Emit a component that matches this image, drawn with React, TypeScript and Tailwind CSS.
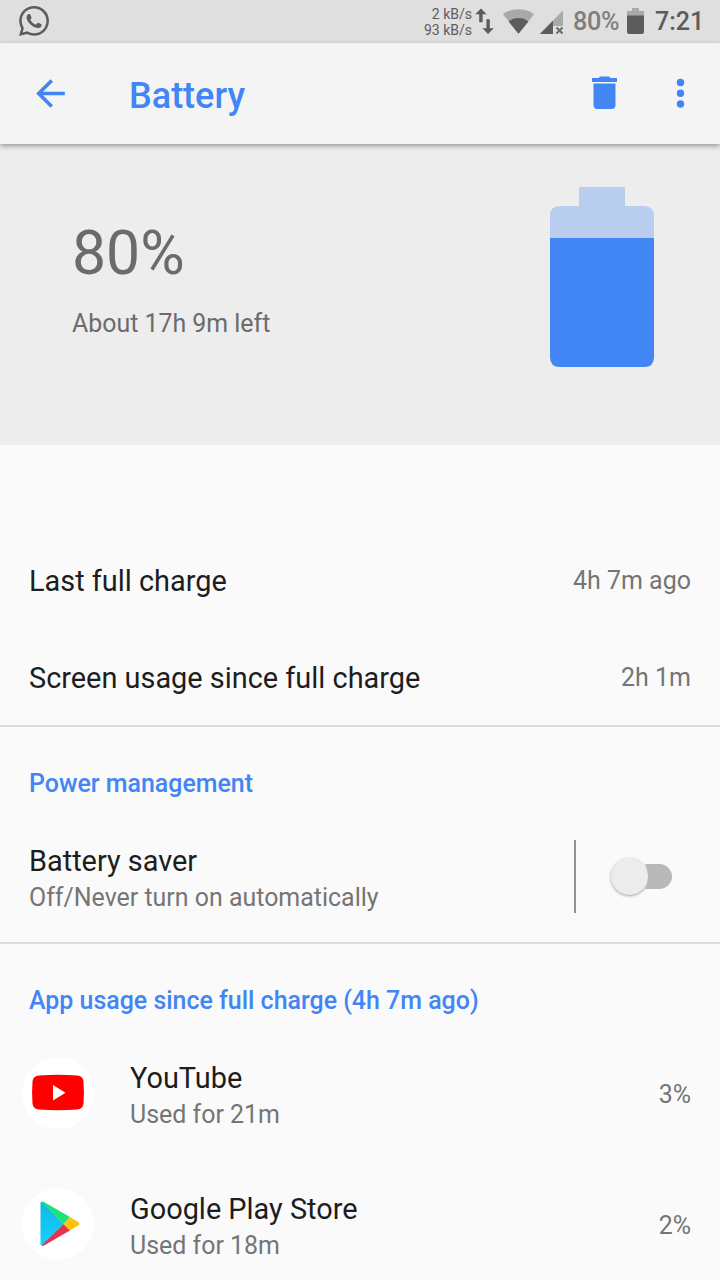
import React from "react";
import { SiWhatsapp } from "react-icons/si";

function StatusBar() {
  return (
    <div className="flex h-[43px] shrink-0 bg-[#dfdfdf] text-[#5c5c5c]">
      <SiWhatsapp className="mt-[6px] ml-[19px] size-[30px] shrink-0" />
      <div className="ml-auto flex w-[60px] flex-col pt-[6px] text-right text-[14px] leading-[16px] whitespace-nowrap">
        <span>2 kB/s</span>
        <span>93 kB/s</span>
      </div>
      <svg className="ml-[3px] h-[43px] w-[20px] shrink-0" viewBox="475 0 20 43" fill="#5c5c5c">
        <path d="M481 8.5l5.6 5.8h-4v8h-3.4v-8h-4z" />
        <path d="M488 34l-5.6-5.8h4v-9h3.4v9h4z" />
      </svg>
      <svg className="ml-[7px] h-[43px] w-[32px] shrink-0" viewBox="502 0 32 43">
        <path d="M518.5 33.7L503 14.2C507 11 512.5 9.2 518.5 9.2S530 11 534 14.2z" fill="#a9a9a9" />
        <path d="M518.5 33.7L508.6 21.4C511.3 19.2 514.7 18 518.5 18s7.2 1.2 9.9 3.4z" fill="#5c5c5c" />
      </svg>
      <svg className="ml-[5px] h-[43px] w-[26px] shrink-0" viewBox="539 0 26 43">
        <path d="M563 10.5V26h-10v-5.5z" fill="#a9a9a9" />
        <path d="M553 20.5V34h-13.2z" fill="#5c5c5c" />
        <path d="M556.5 27.5l6 6M562.5 27.5l-6 6" stroke="#6c6c6c" strokeWidth="2" />
      </svg>
      <span className="ml-[8px] w-[54px] text-[25.2px] leading-[44px] font-medium tracking-[-0.3px] text-[#7e7e7e]">80%</span>
      <svg className="h-[43px] w-[17px] shrink-0" viewBox="627 0 17 43">
        <path d="M632 8h7v3h5v5h-17v-5h5z" fill="#a9a9a9" />
        <path d="M627 15.5h17V32q0 2-2 2h-13q-2 0-2-2z" fill="#5c5c5c" />
      </svg>
      <span className="ml-[11px] w-[65px] text-[25px] leading-[44px] font-medium">7:21</span>
    </div>
  );
}

function AppBar() {
  return (
    <header className="z-10 flex h-[101px] shrink-0 items-center bg-[#f4f4f4] text-[#4285f4] shadow-[0_2px_5px_rgba(0,0,0,0.36)]">
      <svg className="ml-[29px] size-[43px] shrink-0" viewBox="0 0 24 24" fill="currentColor">
        <path d="M20 11H7.830l5.590-5.590L12 4l-8 8 8 8 1.410-1.410L7.830 13H20v-2z" />
      </svg>
      <h1 className="ml-[57px] pt-[4px] text-[36px] leading-[42px] font-medium">Battery</h1>
      <svg className="mb-[2px] ml-auto h-[36px] w-[27px] shrink-0" viewBox="591 75 27 36" fill="currentColor">
        <path d="M592 78h6.5l1.5-1.5h9l1.5 1.5h6.5v4h-25z" />
        <path d="M593.5 83.5h22V105q0 4-4 4h-14q-4 0-4-4z" />
      </svg>
      <svg className="mr-[33px] mb-[2px] ml-[56px] h-[36px] w-[13px] shrink-0" viewBox="0 0 13 36" fill="currentColor">
        <circle cx="6.5" cy="7.5" r="3.7" />
        <circle cx="6.5" cy="18.3" r="3.7" />
        <circle cx="6.5" cy="29" r="3.7" />
      </svg>
    </header>
  );
}

function Summary() {
  return (
    <section className="flex h-[301px] shrink-0 justify-between bg-[#ededed] pr-[66px] pl-[72px] text-[#6b6b6b]">
      <div className="pt-[73px]">
        <div className="text-[60.7px] leading-[73px]">80%</div>
        <div className="mt-[18px] text-[24.9px] leading-[31px]">About 17h 9m left</div>
      </div>
      <svg className="mt-[43px] h-[180px] w-[104px]" viewBox="0 0 104 180">
        <path d="M29 0h46v19h19q10 0 10 10v22.5H0V29q0-10 10-10h19z" fill="#b9cdef" />
        <path d="M0 51h104v119q0 10-10 10H10q-10 0-10-10z" fill="#4285f4" />
      </svg>
    </section>
  );
}

function InfoRow({ label, value }: { label: string; value: string }) {
  return (
    <div className="flex h-[97px] items-center justify-between px-[29px]">
      <span className="text-[28.9px] leading-[34px]">{label}</span>
      <span className="text-[25px] leading-[34px] text-[#757575]">{value}</span>
    </div>
  );
}

function TwoLine({ title, detail }: { title: string; detail: string }) {
  return (
    <div className="flex flex-col pt-[3px]">
      <span className="text-[28.9px] leading-[38px]">{title}</span>
      <span className="text-[24.95px] leading-[35px] text-[#757575]">{detail}</span>
    </div>
  );
}

function AppRow({ icon, name, used, share }: { icon: React.ReactNode; name: string; used: string; share: string }) {
  return (
    <div className="flex h-[131px] shrink-0 items-center pr-[29px] pl-[22px]">
      <div className="mr-[36px] size-[72px] shrink-0 rounded-full bg-white">{icon}</div>
      <div className="flex grow items-center justify-between pt-[2px]">
        <TwoLine title={name} detail={used} />
        <span className="pt-[3px] text-[24.9px] leading-[34px] text-[#757575]">{share}</span>
      </div>
    </div>
  );
}

const youtube = (
  <svg viewBox="0 0 72 72">
    <path d="M17 18.5q19-1.5 38 0q6 .5 6.5 6q.8 11 0 22q-.5 5.5-6.5 6q-19 1.5-38 0q-6-.5-6.5-6q-.8-11 0-22q.5-5.5 6.5-6z" fill="#f00" />
    <path d="M31 28v15.5l12.5-7.75z" fill="#fff" />
  </svg>
);

const playStore = (
  <svg viewBox="0 0 72 72">
    <defs>
      <linearGradient id="blue" x1="0" y1="0" x2="0" y2="1">
        <stop offset="0" stopColor="#12b5e8" />
        <stop offset="1" stopColor="#14d4fb" />
      </linearGradient>
    </defs>
    <g transform="translate(-0.5 0)">
      <path d="M19 15q0-2 2-1L42 36 21 57q-2 1-2-1z" fill="url(#blue)" />
      <path d="M20 14q1-.8 2.5 0L48.5 29 42 36z" fill="#1be37c" />
      <path d="M20 57.5q1 .8 2.5 0L48.5 42.5 42 36z" fill="#e8334f" />
      <path d="M48.5 29l8.5 5.2q2 1.5 0 3L48.5 42.5 42 36z" fill="#fdc20f" />
    </g>
  </svg>
);

export default function App() {
  return (
    <div className="flex h-[1280px] w-[720px] flex-col overflow-hidden bg-[#fafafa] font-[Roboto,sans-serif] text-[#1d1d1d]">
      <StatusBar />
      <AppBar />
      <Summary />
      <section className="h-[282px] shrink-0 border-b-2 border-[#dcdcdc] pt-[87px]">
        <InfoRow label="Last full charge" value="4h 7m ago" />
        <InfoRow label="Screen usage since full charge" value="2h 1m" />
      </section>
      <section className="h-[217px] shrink-0 border-b-2 border-[#dcdcdc] pt-[42px]">
        <h2 className="pl-[29px] text-[24.95px] leading-[30px] font-medium text-[#4285f4]">Power management</h2>
        <div className="mt-[41px] flex h-[73px] items-center pl-[29px]">
          <TwoLine title="Battery saver" detail="Off/Never turn on automatically" />
          <div className="ml-auto h-[73px] w-[2px] bg-[#929292]" />
          <div className="mr-[48px] ml-[35px] flex h-[36px] w-[61px] items-center">
            <div className="size-[37px] shrink-0 rounded-full bg-[#ececec] shadow-[0_1px_3px_rgba(0,0,0,0.35)]" />
            <div className="-ml-[6px] h-[25px] w-[30px] rounded-r-full bg-[#b9b9b9] [clip-path:path('M3_0H30V25H3Q9_12.5_3_0Z')]" />
          </div>
        </div>
      </section>
      <section className="shrink-0 pt-[42px]">
        <h2 className="pl-[29px] text-[24.95px] leading-[30px] font-medium text-[#4285f4]">App usage since full charge (4h 7m ago)</h2>
        <div className="mt-[11px]">
          <AppRow icon={youtube} name="YouTube" used="Used for 21m" share="3%" />
          <AppRow icon={playStore} name="Google Play Store" used="Used for 18m" share="2%" />
        </div>
      </section>
    </div>
  );
}
